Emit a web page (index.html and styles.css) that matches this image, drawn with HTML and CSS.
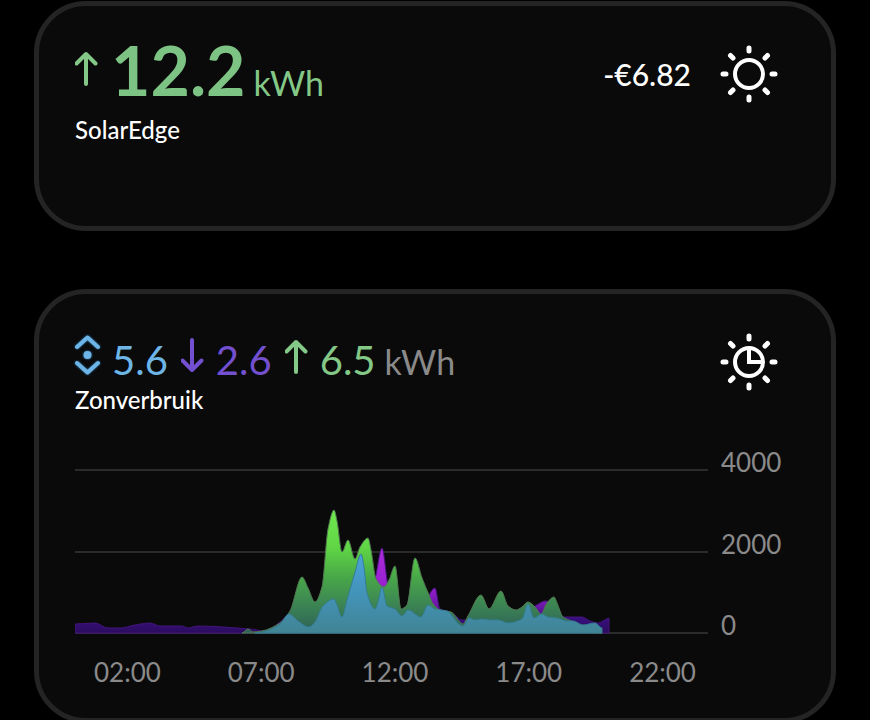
FILE: index.html
```
<!DOCTYPE html>
<html lang="nl">
<head>
<meta charset="utf-8">
<meta name="viewport" content="width=device-width, initial-scale=1">
<title>Zonne-energie</title>
<link rel="stylesheet" href="styles.css">
</head>
<body>
<main class="dashboard">
  <section class="card card-solar">
    <header class="card-head">
      <div class="summary">
        <div class="values values-large">
          <svg class="arrow green" viewBox="0 0 24 36" aria-hidden="true"><path d="M11 34V4M1.500 13.500L11 4L20.500 13.500"/></svg>
          <strong class="total">12.2</strong>
          <span class="unit green">kWh</span>
        </div>
        <h2 class="title">SolarEdge</h2>
      </div>
      <div class="aside">
        <span class="price">-€6.82</span>
        <svg class="sun" viewBox="-29 -29 58 58" aria-hidden="true">
          <circle r="14"/>
          <path class="rays" d="M0-26V-23M0 26V23M-26 0H-23M26 0H23M-18.500-18.500L-16-16M18.500-18.500L16-16M-18.500 18.500L-16 16M18.500 18.500L16 16"/>
        </svg>
      </div>
    </header>
  </section>

  <section class="card card-usage">
    <header class="card-head">
      <div class="summary">
        <div class="values">
          <svg class="self-use blue" viewBox="0 0 26 42" aria-hidden="true"><path d="M2 13L12.500 3.500L23 13M2 29L12.500 38.500L23 29"/><circle cx="12.500" cy="21" r="4"/></svg>
          <span class="value blue">5.6</span>
          <svg class="arrow purple" viewBox="0 0 24 36" aria-hidden="true"><path d="M11 2V32M1.500 22.500L11 32L20.500 22.500"/></svg>
          <span class="value purple">2.6</span>
          <svg class="arrow green" viewBox="0 0 24 36" aria-hidden="true"><path d="M11 34V4M1.500 13.500L11 4L20.500 13.500"/></svg>
          <span class="value green">6.5</span>
          <span class="unit">kWh</span>
        </div>
        <h2 class="title">Zonverbruik</h2>
      </div>
      <div class="aside">
        <svg class="sun" viewBox="-29 -29 58 58" aria-hidden="true">
          <circle r="14"/>
          <path class="hands" d="M0-14V0H14"/>
          <path class="rays" d="M0-26V-23M0 26V23M-26 0H-23M26 0H23M-18.500-18.500L-16-16M18.500-18.500L16-16M-18.500 18.500L-16 16M18.500 18.500L16 16"/>
        </svg>
      </div>
    </header>

    <div class="chart">
      <div class="plot">
        <svg class="areas" viewBox="75 460 633 176" preserveAspectRatio="none" aria-hidden="true">
          <defs>
            <linearGradient id="fill-purple" gradientUnits="userSpaceOnUse" x1="0" y1="548" x2="0" y2="633">
              <stop offset="0" stop-color="#a92ed8"/><stop offset=".45" stop-color="#981fd0"/><stop offset=".68" stop-color="#6c17a8"/><stop offset=".84" stop-color="#370f7a"/><stop offset="1" stop-color="#2b0c5e"/>
            </linearGradient>
            <linearGradient id="fill-green" gradientUnits="userSpaceOnUse" x1="0" y1="510" x2="0" y2="633">
              <stop offset="0" stop-color="#70e850"/><stop offset=".3" stop-color="#60d645"/><stop offset=".55" stop-color="#48a748"/><stop offset=".72" stop-color="#3f8c52"/><stop offset="1" stop-color="#2d6058"/>
            </linearGradient>
            <linearGradient id="fill-blue" gradientUnits="userSpaceOnUse" x1="0" y1="554" x2="0" y2="633">
              <stop offset="0" stop-color="#4aa3da"/><stop offset=".6" stop-color="#4290b2"/><stop offset="1" stop-color="#418494"/>
            </linearGradient>
          </defs>
          <path class="grid" d="M75 470H708M75 552H708M75 633H708"/>
          <path id="purple" class="area-purple"/>
          <path id="green" class="area-green"/>
          <path id="blue" class="area-blue"/>
        </svg>
        <div class="hours"><span>02:00</span><span>07:00</span><span>12:00</span><span>17:00</span><span>22:00</span></div>
      </div>
      <div class="scale"><span>4000</span><span>2000</span><span>0</span></div>
    </div>
  </section>
</main>
<script src="chart.js"></script>
</body>
</html>
```
FILE: styles.css
```
* { box-sizing: border-box; }

html { overflow: hidden; }

body {
  margin: 0;
  background: #000;
  color: #fff;
  font-family: Lato, "Liberation Sans", sans-serif;
}

.dashboard {
  display: flex;
  flex-direction: column;
  gap: 58px;
  padding: 1px 34px 0;
}

.card {
  background: #0a0a0a;
  border: 5px solid #242424;
  border-radius: 52px;
  padding: 36px 53px 0 36px;
}

.card-solar { min-height: 230px; }
.card-usage { padding-bottom: 30px; }

.card-head {
  display: flex;
  justify-content: space-between;
}

.values {
  display: flex;
  align-items: baseline;
  height: 56px;
  line-height: 60px;
}

.values-large { line-height: 56px; }

.values svg {
  flex: none;
  align-self: flex-start;
  fill: none;
  stroke: currentColor;
  stroke-width: 4px;
  stroke-linecap: round;
  stroke-linejoin: round;
}

.arrow {
  width: 24px;
  height: 36px;
  margin-top: 8px;
}

.self-use {
  width: 26px;
  height: 42px;
  margin-top: 4px;
}

.self-use { filter: drop-shadow(0 0 1px #2d7fb8); }
.self-use circle { fill: currentColor; stroke: none; }

.total {
  margin: 0 8px 0 12px;
  color: #7dc383;
  font-size: 68px;
  font-weight: 700;
}

.value {
  margin: 0 13px 0 11px;
  font-size: 40px;
}

.unit {
  font-size: 34px;
  color: #8a8a8a;
}

.value + .unit { margin-left: -4px; }

.green { color: #84c887; }
.blue { color: #6db5e6; }
.purple { color: #7250d0; }

.title {
  margin: 0;
  font-size: 24px;
  line-height: 28px;
  font-weight: 500;
}

.values-large + .title { margin-top: 18px; }

.aside {
  display: flex;
  align-items: center;
  gap: 29px;
  height: 63px;
}

.price {
  font-size: 30px;
  font-weight: 500;
}

.sun {
  width: 58px;
  height: 58px;
  fill: none;
  stroke: #fff;
  stroke-width: 4px;
}

.rays {
  stroke-width: 5px;
  stroke-linecap: round;
}

.chart {
  display: flex;
  gap: 13px;
  margin-top: 46px;
  color: #8a8a8a;
  font-size: 26px;
  line-height: 32px;
}

.plot { flex: 1; }

.areas {
  display: block;
  width: 100%;
  height: 176px;
}

.grid {
  fill: none;
  stroke: #2b2b2b;
  stroke-width: 2px;
}

.area-purple { fill: url(#fill-purple); stroke: #42147a; }
.area-green { fill: url(#fill-green); stroke: #527a52; }
.area-blue { fill: url(#fill-blue); stroke: #357d91; }

.hours {
  display: flex;
  justify-content: space-between;
  padding: 0 12px 0 19px;
  margin-top: 20px;
}

.scale {
  display: flex;
  flex-direction: column;
  justify-content: space-between;
  width: 57px;
  height: 195px;
  margin-top: -14px;
}
```
FILE: chart.js
```
const BASE = 633;

const series = {
  purple: [[75,624],[95,623],[108,628],[120,628],[135,625],[150,623],[160,626],[182,626],[188,628],[198,626],[223,627],[237,628],[250,629],[265,631],[280,622],[290,614],[300,621],[310,626],[323,606],[334,602],[341,617],[355,600],[367,600],[375,579],[382,548],[388,586],[395,610],[415,614],[423,612],[429,595],[435,588],[440,609],[446,611],[452,613],[462,620],[475,620],[508,622],[522,614],[535,606],[540,603],[545,601],[551,602],[562,617],[582,617],[590,621],[598,623],[603,621],[609,618]],
  green: [[242,633],[248,629],[253,632],[262,631],[280,623],[290,611],[302,577],[308,588],[315,602],[322,587],[328,529],[334,510],[337,521],[342,552],[348,540],[355,559],[360,547],[368,538],[371,550],[376,579],[384,587],[389,580],[395,566],[401,609],[407,605],[415,558],[422,578],[429,595],[433,604],[440,610],[451,612],[460,622],[463,624],[468,616],[481,595],[489,609],[501,591],[508,606],[516,610],[522,607],[528,602],[535,607],[541,614],[547,603],[554,597],[557,603],[563,617],[569,620],[602,633]],
  blue: [[255,633],[266,631],[280,624],[289,614],[298,621],[309,627],[315,622],[323,606],[334,599],[337,605],[342,617],[347,600],[355,572],[361,554],[364,567],[367,593],[375,609],[378,602],[382,587],[387,606],[395,609],[402,616],[408,610],[421,617],[428,605],[435,609],[447,611],[460,625],[463,626],[469,618],[475,620],[482,619],[490,620],[498,620],[508,623],[522,619],[528,604],[534,618],[542,614],[548,617],[557,618],[567,621],[573,621],[583,625],[595,623],[602,628]]
};

// Monotone cubic curve: smooth between samples, flat at every peak and dip.
function areaPath(points) {
  const slope = i => (points[i + 1][1] - points[i][1]) / (points[i + 1][0] - points[i][0]);
  const last = points.length - 1;
  const tangents = points.map((_, i) => {
    if (i === 0 || i === last) return 0;
    const a = slope(i - 1), b = slope(i);
    return a * b <= 0 ? 0 : 2 * a * b / (a + b);
  });
  let d = `M${points[0][0]} ${BASE}V${points[0][1]}`;
  for (let i = 0; i < last; i++) {
    const [x0, y0] = points[i], [x1, y1] = points[i + 1];
    const h = (x1 - x0) / 3;
    d += `C${x0 + h} ${y0 + tangents[i] * h} ${x1 - h} ${y1 - tangents[i + 1] * h} ${x1} ${y1}`;
  }
  return `${d}V${BASE}Z`;
}

for (const [name, points] of Object.entries(series)) {
  document.getElementById(name).setAttribute("d", areaPath(points));
}
```
